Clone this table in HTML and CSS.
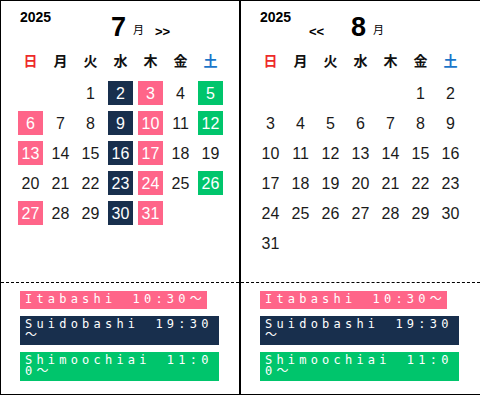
FILE: index.html
```html
<!DOCTYPE html>
<html lang="ja">
<head>
<meta charset="utf-8">
<title>Calendar</title>
<link rel="stylesheet" href="styles.css">
</head>
<body>
<div class="calendar">
  <section class="month">
    <div class="cal">
      <div class="head">
        <div class="year">2025</div>
        <div class="prev"></div>
        <div class="title"><span class="num">7</span><span class="tsuki">月</span></div>
        <div class="next">&gt;&gt;</div>
      </div>
      <div class="dow">
        <span class="sun">日</span><span>月</span><span>火</span><span>水</span><span>木</span><span>金</span><span class="sat">土</span>
      </div>
      <div class="days">
        <span></span><span></span><span>1</span><span class="navy">2</span><span class="pink">3</span><span>4</span><span class="green">5</span>
        <span class="pink">6</span><span>7</span><span>8</span><span class="navy">9</span><span class="pink">10</span><span>11</span><span class="green">12</span>
        <span class="pink">13</span><span>14</span><span>15</span><span class="navy">16</span><span class="pink">17</span><span>18</span><span>19</span>
        <span>20</span><span>21</span><span>22</span><span class="navy">23</span><span class="pink">24</span><span>25</span><span class="green">26</span>
        <span class="pink">27</span><span>28</span><span>29</span><span class="navy">30</span><span class="pink">31</span>
      </div>
    </div>
    <div class="legend">
      <div class="tag pink">Itabashi　10:30～</div>
      <div class="tag navy">Suidobashi　19:30～</div>
      <div class="tag green">Shimoochiai　11:00～</div>
    </div>
  </section>
  <section class="month last">
    <div class="cal">
      <div class="head">
        <div class="year">2025</div>
        <div class="prev">&lt;&lt;</div>
        <div class="title"><span class="num">8</span><span class="tsuki">月</span></div>
        <div class="next"></div>
      </div>
      <div class="dow">
        <span class="sun">日</span><span>月</span><span>火</span><span>水</span><span>木</span><span>金</span><span class="sat">土</span>
      </div>
      <div class="days">
        <span></span><span></span><span></span><span></span><span></span><span>1</span><span>2</span>
        <span>3</span><span>4</span><span>5</span><span>6</span><span>7</span><span>8</span><span>9</span>
        <span>10</span><span>11</span><span>12</span><span>13</span><span>14</span><span>15</span><span>16</span>
        <span>17</span><span>18</span><span>19</span><span>20</span><span>21</span><span>22</span><span>23</span>
        <span>24</span><span>25</span><span>26</span><span>27</span><span>28</span><span>29</span><span>30</span>
        <span>31</span>
      </div>
    </div>
    <div class="legend">
      <div class="tag pink">Itabashi　10:30～</div>
      <div class="tag navy">Suidobashi　19:30～</div>
      <div class="tag green">Shimoochiai　11:00～</div>
    </div>
  </section>
</div>
</body>
</html>
```
FILE: styles.css
```css
html, body {
  margin: 0;
  padding: 0;
  background: #fff;
}
body {
  font-family: "Liberation Sans", Arial, "Noto Sans CJK JP", sans-serif;
  color: #1a1a1a;
  overflow: hidden;
}
.calendar {
  display: flex;
  width: 480px;
  height: 395px;
}
.month {
  box-sizing: border-box;
  width: 240px;
  height: 395px;
  border: 1px solid #000;
  display: flex;
  flex-direction: column;
}
.month.last {
  border-right: none;
}
.cal {
  height: 281px;
  border-bottom: 1px dashed #000;
}
.head {
  display: flex;
  align-items: baseline;
  height: 49px;
  box-sizing: border-box;
  padding: 8px 0 0 19px;
}
.year {
  align-self: flex-start;
  width: 49px;
  font-size: 14px;
  line-height: 16px;
  font-weight: bold;
  color: #000;
}
.prev {
  width: 42px;
  font-size: 13px;
  font-weight: bold;
  color: #000;
}
.title {
  width: 44px;
  margin-top: 3px;
  line-height: 30px;
  color: #000;
}
.num {
  font-size: 27px;
  font-weight: bold;
}
.tsuki {
  font-family: "Noto Sans CJK JP", sans-serif;
  font-size: 11px;
  margin-left: 7px;
  vertical-align: 2px;
}
.next {
  font-size: 13px;
  font-weight: bold;
  color: #000;
}
.dow, .days {
  display: grid;
  grid-template-columns: repeat(7, 30px);
  margin-left: 14px;
}
.dow span {
  width: 25px;
  margin-left: 3px;
  text-align: center;
  font-family: "Noto Sans CJK JP", sans-serif;
  font-weight: bold;
  font-size: 14px;
  line-height: 20px;
  color: #111;
}
.dow .sun { color: #ee2a2a; }
.dow .sat { color: #1a75c9; }
.days {
  margin-top: 11px;
  row-gap: 6px;
}
.days span {
  width: 25px;
  height: 24px;
  margin-left: 3px;
  text-align: center;
  font-size: 16px;
  line-height: 26px;
}
.pink { background: #ff6589; color: #fff; }
.navy { background: #182f4d; color: #fff; }
.green { background: #00c56c; color: #fff; }
.legend {
  display: flex;
  flex-direction: column;
  align-items: flex-start;
  gap: 7px;
  width: 199px;
  padding: 8px 0 0 19px;
}
.tag {
  max-width: 100%;
  box-sizing: border-box;
  padding: 3px 1px 3px 5px;
  font-family: "DejaVu Sans Mono", "Noto Sans CJK JP", monospace;
  font-size: 12px;
  line-height: 11.5px;
  letter-spacing: 4.2px;
  word-break: break-all;
  color: #fff;
}
```
